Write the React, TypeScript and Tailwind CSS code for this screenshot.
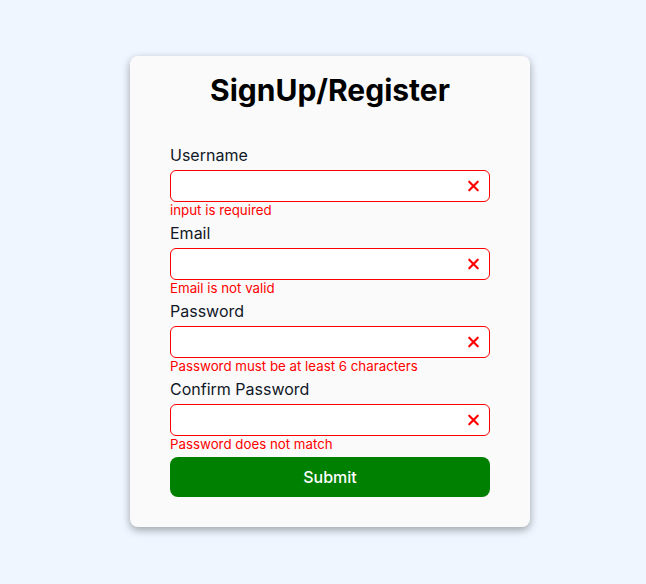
import { X } from "lucide-react";

const fields = [
  { label: "Username", type: "text", error: "input is required" },
  { label: "Email", type: "email", error: "Email is not valid" },
  { label: "Password", type: "password", error: "Password must be at least 6 characters" },
  { label: "Confirm Password", type: "password", error: "Password does not match" },
];

export default function App() {
  return (
    <div className="min-h-[584px] w-full bg-[#eff6ff] pt-[56px] font-['Inter',sans-serif]">
      <div className="ml-[130px] w-[400px] rounded-lg bg-[#fafafa] px-10 pt-4 pb-[30px] shadow-[0_3px_8px_rgba(0,0,0,0.35)]">
        <h1 className="text-center text-3xl font-bold text-black">SignUp/Register</h1>

        <form className="mt-[35px] flex flex-col" onSubmit={(e) => e.preventDefault()}>
          {fields.map((f) => (
            <div key={f.label} className="flex flex-col">
              <label className="mb-[3px] text-base leading-6 text-[#111827]">{f.label}</label>
              <div className="relative">
                <input
                  type={f.type}
                  className="h-8 w-full rounded-md border border-[#ff0000] bg-white px-2 pr-8 outline-none"
                />
                <X
                  size={17}
                  strokeWidth={3}
                  className="absolute right-[8px] top-1/2 -translate-y-1/2 text-[#ff0000]"
                />
              </div>
              <p className="pb-[2px] text-[13.3px] leading-[17px] text-[#ff0000]">{f.error}</p>
            </div>
          ))}

          <button
            type="submit"
            className="mt-[2px] h-10 w-full rounded-lg bg-[#008000] text-base font-medium text-white"
          >
            Submit
          </button>
        </form>
      </div>
    </div>
  );
}
